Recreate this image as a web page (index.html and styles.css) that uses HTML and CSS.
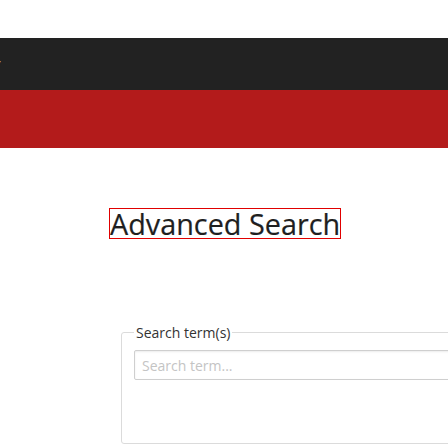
FILE: index.html
```html
<!DOCTYPE html>
<html>
<head>
<meta charset="utf-8">
<link rel="stylesheet" href="styles.css">
</head>
<body>
<div class="page">
  <div class="topstrip"></div>
  <div class="navbar"><span class="navtext">y</span></div>
  <div class="banner"></div>
  <main class="content">
    <h1 class="title">Advanced Search</h1>
    <fieldset class="terms">
      <legend class="terms-legend">Search term(s)</legend>
      <input class="term-input" type="text" placeholder="Search term...">
    </fieldset>
  </main>
</div>
</body>
</html>
```

FILE: styles.css
```css
html, body {
  margin: 0;
  padding: 0;
  overflow: hidden;
  background: #fff;
}
.page {
  width: 700px;
  font-family: "Open Sans", "Noto Sans", sans-serif;
  color: #363636;
}
.topstrip {
  height: 38px;
}
.navbar {
  height: 52px;
  background: #222222;
  display: flex;
  align-items: center;
}
.navtext {
  color: #ddd;
  font-size: 11px;
  font-style: italic;
  margin-left: -5px;
  margin-top: -4px;
}
.banner {
  height: 58px;
  background: #b31b1b;
}
.content {
  padding-left: 109px;
  padding-top: 60px;
}
.title {
  display: inline-block;
  margin: 0;
  font-size: 28.8px;
  font-weight: 400;
  line-height: 29px;
  border: 1px solid #e00000;
  color: #1f1f1f;
  -webkit-text-stroke: 0.2px #1f1f1f;
}
.terms {
  margin: 83px 0 0 12px;
  border: 1px solid #dbdbdb;
  border-radius: 3px;
  padding: 8px 12px 63px 12px;
  width: 500px;
}
.terms-legend {
  font-size: 14px;
  padding: 0 2px;
  color: #333;
}
.term-input {
  display: block;
  box-sizing: border-box;
  width: 100%;
  height: 30px;
  border: 1px solid #cfcfcf;
  border-radius: 2px;
  padding: 0 7px;
  font-family: "Open Sans", sans-serif;
  font-size: 14px;
  box-shadow: inset 0 1px 2px rgba(10,10,10,0.08);
}
.term-input::placeholder {
  color: #c4c4c4;
}
```
